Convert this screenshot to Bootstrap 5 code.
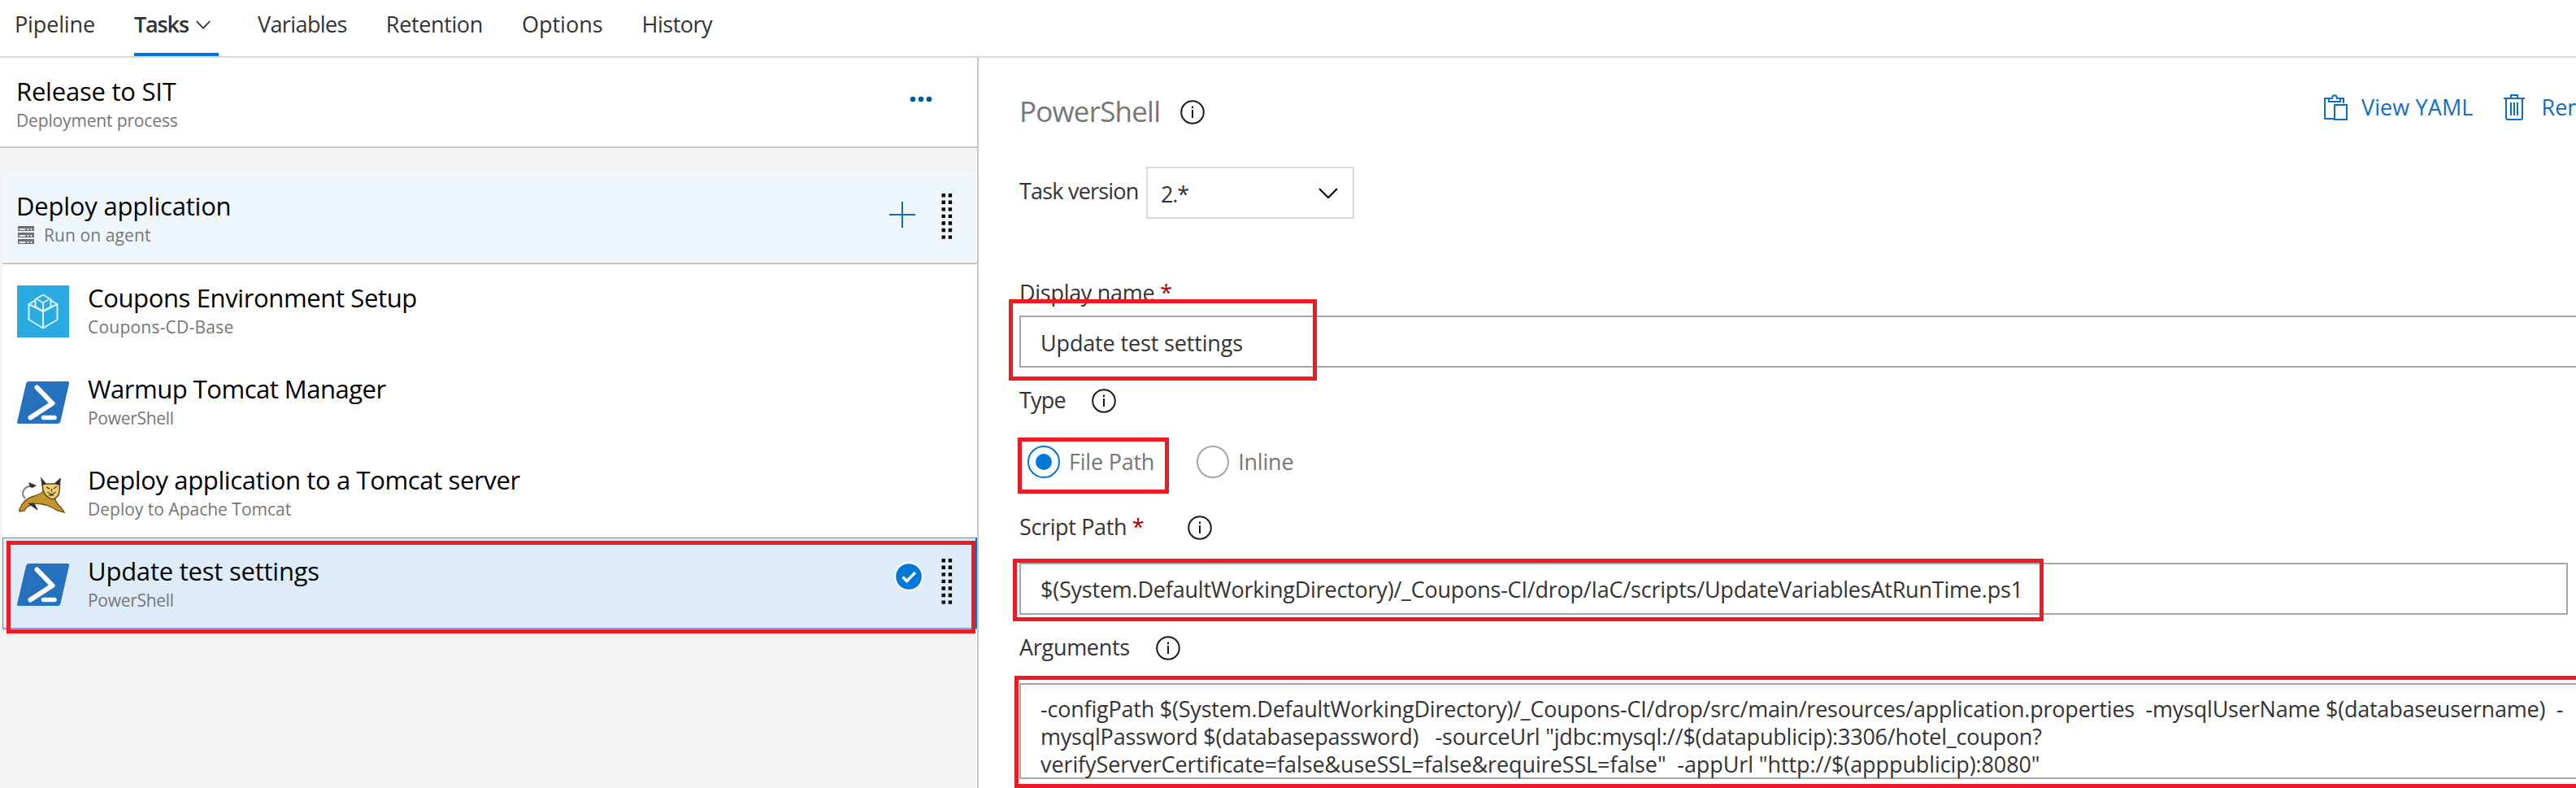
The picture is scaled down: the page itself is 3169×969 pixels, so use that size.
<!DOCTYPE html>
<html lang="en">
<head>
<meta charset="utf-8">
<meta name="viewport" content="width=device-width, initial-scale=1">
<title>Release pipeline tasks</title>
<link href="https://cdn.jsdelivr.net/npm/bootstrap@5.3.0/dist/css/bootstrap.min.css" rel="stylesheet">
<style>
body{height:969px;overflow:hidden;background:#fff;color:#333;font:27px/34px "Open Sans","Noto Sans",sans-serif;white-space:nowrap}
svg{display:block;flex:none}
/* letter tracking */
.k0{letter-spacing:-.1px}.k1{letter-spacing:-.15px}.k2{letter-spacing:-.22px}.k3{letter-spacing:-.29px}.k4{letter-spacing:-.37px}.k5{letter-spacing:-.5px}.k6{letter-spacing:-.6px}.k8{letter-spacing:-.8px}.k11{letter-spacing:-1.13px}
.p1{letter-spacing:.1px}.p2{letter-spacing:.22px}
/* top tabs */
.tabs{height:71px;border-bottom:2px solid #d9d9d9;padding-left:18px;gap:48px}
.tab-item{line-height:60px;height:69px}
.tab-item.current{font-weight:600;border-bottom:4px solid #0078d7}
.tab-arrow{margin:25px 10px 0 9px}
/* task list */
.side{width:1204px;height:898px;background:#f3f3f3;border-right:2px solid #c8c8c8}
.ttl{font-size:31px;line-height:36px;color:#000}
.sub{font-size:21px;line-height:36px;color:#767676}
.stage-row{height:111px;background:#fff;border-bottom:2px solid #c8c8c8;padding:23px 55px 0 20px}
.stage-row svg{margin-top:24px}
.phase{height:113px;margin:30px 0 0 3px;background:#eff6fc;border-bottom:2px solid #c8c8c8;padding:23px 30px 0 17px}
.phase .sub{gap:12px;padding-left:2px}
.phase .plus{margin:13px 32px 0 0}
.task{height:112px;margin-left:3px;background:#fff;padding:23px 30px 0 18px;gap:23px}
.task.sel{background:#deecf9;border:1px solid #4a8ff0;border-right:2px solid #106ebe;padding:22px 28px 0 17px;box-shadow:0 2px 0 #c8c8c8}
.grip,.task-icon{margin-top:3px}
.check{margin:7px -1px 0 auto}
/* red call-outs drawn over the page */
.callout{position:absolute;border:5px solid #ed1c24;pointer-events:none}
.c-task{left:4px;top:3px;width:1192px;height:114px}
.c-name{left:-13px;top:-20px;width:379px;height:100px}
.c-type{left:-2px;top:-10px;width:186px;height:69px}
.c-path{left:-8px;top:-5px;width:1268px;height:77px}
.c-args{left:-6px;top:-9px;width:1940px;height:138px}
/* details */
.main-pane{padding:41px 0 0 50px;height:898px;min-width:0;overflow:hidden}
.head{height:48px;gap:25px}
.head h1{font-size:35px;line-height:49px;font-weight:400;color:#767676;margin:0}
.head .info{margin-top:11px}
.tools{width:310px;color:#106ebe;overflow:hidden;margin-top:3px}
.tool-bin{margin:0 20px 0 38px}
.ver{margin-top:45px;height:64px}
.ver-label{width:156px;padding-top:13px}
.ver-box{width:256px;height:64px;border:2px solid #d9d9d9;padding:15px 18px 0 16px}
.ver-box svg{margin-top:9px}
.lab{height:34px;line-height:36px}
.lab .info{margin-top:4px}
.lab .w-type{width:89px}.lab .w-path{width:207px}.lab .w-args{width:168px}
.field{height:64px;border:2px solid #a6a6a6;padding:15px 23px 0 24px}
.path-field{padding-top:14px}
.args{height:118px;padding-top:13px;white-space:pre}
.req{color:#a80000}
.radios{height:40px;padding-left:10px;color:#767676}
.radios span{line-height:39px;margin-left:11px}
.radios .first-option{margin-right:52px}
.mt-name{margin-top:73px}.mt-in{margin-top:12px}.mt-lab{margin-top:22px}.mt-radio{margin-top:40px}.mt-path{margin-top:42px}.mt-box{margin-top:28px}
.wide{width:1935px}.path-w{width:1905px}
</style>
</head>
<body>
<svg width="0" height="0" class="d-none">
<symbol id="info" viewBox="0 0 30 30"><circle cx="15" cy="15" r="13.8" fill="none" stroke="#1a1a1a" stroke-width="2"/><path d="M15 12v10M15 7.6v2.6" stroke="#1a1a1a" stroke-width="2"/></symbol>
<symbol id="ps" viewBox="0 0 64 64"><path d="M14.500 6H62Q64.500 6 64 8.500L53.500 55Q52.700 58 50 58H2Q-.5 58 .2 55.500L11 9Q11.800 6 14.500 6z" fill="#2671be"/><path d="M24.500 13.500L43.500 33 16.500 50.500" fill="none" stroke="#fff" stroke-width="6" stroke-linecap="round" stroke-linejoin="round"/><path d="M32.500 50.500H46" stroke="#fff" stroke-width="5.500" stroke-linecap="round"/></symbol>
<symbol id="grip" viewBox="0 0 14 56"><path d="M2.700 0v56M10.900 0v56" stroke="#000" stroke-width="4.400" stroke-dasharray="4.400 4.170"/></symbol>
</svg>

<nav class="tabs d-flex">
<div class="tab-item"><span class="k1">Pipeline</span></div>
<div class="tab-item current d-flex"><span class="k11">Tasks</span><svg class="tab-arrow" width="18" height="12" viewBox="0 0 18 12"><path d="M.8 1l8.200 8.700L17.200 1" fill="none" stroke="#333" stroke-width="1.800"/></svg></div>
<div class="tab-item"><span class="k6">Variables</span></div>
<div class="tab-item"><span class="k4">Retention</span></div>
<div class="tab-item"><span>Options</span></div>
<div class="tab-item"><span class="k5">History</span></div>
</nav>

<div class="d-flex">
<aside class="side flex-shrink-0">
<div class="stage-row d-flex justify-content-between">
<div><div class="ttl k2">Release to SIT</div><div class="sub k1">Deployment process</div></div>
<svg width="28" height="8" viewBox="0 0 28 8"><g fill="#005ba1"><circle cx="4" cy="4" r="3.300"/><circle cx="14" cy="4" r="3.300"/><circle cx="24" cy="4" r="3.300"/></g></svg>
</div>
<div class="phase d-flex">
<div class="me-auto"><div class="ttl k2">Deploy application</div>
<div class="sub d-flex align-items-center p1"><svg width="20" height="22" viewBox="0 0 20 22"><path d="M0 0h20v6H0zM0 8h20v6H0zM0 16h20v6H0z" fill="#6e6e6e"/><path d="M1.500 3h8v1.800h-8zM1.500 11h8v1.800h-8zM1.500 19h8v1.800h-8zM11.500 2.800h2v2h-2zM11.500 10.800h2v2h-2zM11.500 18.800h2v2h-2zM15.500 2.800h2v2h-2zM15.500 10.800h2v2h-2zM15.500 18.800h2v2h-2z" fill="#eff6fc"/></svg>Run on agent</div></div>
<svg class="plus" width="32" height="32" viewBox="0 0 32 32"><path d="M0 16h32M16 0v32" stroke="#106ebe" stroke-width="2"/></svg>
<svg class="grip" width="14" height="56"><use href="#grip"/></svg>
</div>
<div class="task d-flex">
<svg class="task-icon" width="64" height="64" viewBox="0 0 64 64"><path fill="#29abe2" d="M0 0h64v64H0z"/><g fill="none" stroke="#d9f2fc" stroke-width="2" stroke-linejoin="round"><path d="M23 18L14.500 23v19L32 52.500 49.500 42V23L41 18M14.500 23L32 32l17.500-9M32 32v20"/><path d="M32 11.500l9.500 5.500v9.500L32 31.500l-9.500-5V17z"/><path d="M25 17l7 4.500 7-4.500M32 21.500V31"/></g></svg>
<div><div class="ttl k4">Coupons Environment Setup</div><div class="sub p2">Coupons-CD-Base</div></div>
</div>
<div class="task d-flex">
<svg class="task-icon" width="64" height="64"><use href="#ps"/></svg>
<div><div class="ttl k5">Warmup Tomcat Manager</div><div class="sub k3">PowerShell</div></div>
</div>
<div class="task d-flex">
<svg class="task-icon" width="64" height="64" viewBox="0 0 64 64">
<path d="M10 38C4 32 7 22 22 22" fill="none" stroke="#777" stroke-width="1.800"/><path d="M14 18l10 4-5 3-3-1z" fill="#333"/>
<path d="M3 51C7 42 12 37 21 35 28 33 31 31 33 28l13 8c1 5 4 10 9 14l3 5-8-2C45 50 41 48 36 46c-6-1-12-3-16-1-5 2-9 3-11 8l-6 1z" fill="#c4952b" stroke="#6b4c16" stroke-width="1.300"/>
<path d="M14 44l11 8-4-8zM34 30l9 6" fill="#333" stroke="#333"/>
<path d="M30 14l5 6h11l7-6-1 15c0 5-4 9-8 10-6-1-10-6-12-11z" fill="#f0cf7a" stroke="#5c4518" stroke-width="1.500"/>
<path d="M30 13l6 7-5 2zM53 13l-7 7 6 2z" fill="#333"/>
<path d="M36 24l4 2M49 23l-4 3M42.500 26v4M37 30l5.500 3 5.500-3M39 34h6" fill="none" stroke="#5c4518" stroke-width="1.400"/></svg>
<div><div class="ttl k4">Deploy application to a Tomcat server</div><div class="sub">Deploy to Apache Tomcat</div></div>
</div>
<div class="task sel d-flex position-relative">
<svg class="task-icon" width="64" height="64"><use href="#ps"/></svg>
<div><div class="ttl k2">Update test settings</div><div class="sub k3">PowerShell</div></div>
<svg class="check" width="36" height="36" viewBox="0 0 36 36"><circle cx="18" cy="18" r="18" fill="#fff"/><circle cx="18" cy="18" r="15.800" fill="#0078d7"/><path d="M10.500 18.500l5 5L26 13" fill="none" stroke="#fff" stroke-width="3.400"/></svg>
<svg class="grip" width="14" height="56"><use href="#grip"/></svg>
<div class="callout c-task"></div>
</div>
</aside>

<main class="main-pane flex-grow-1">
<div class="head d-flex">
<h1 class="k8">PowerShell</h1>
<svg class="info" width="30" height="30"><use href="#info"/></svg>
<div class="tools d-flex ms-auto">
<svg width="30" height="34" viewBox="0 0 30 34" class="me-3"><g fill="none" stroke="#106ebe" stroke-width="2"><path d="M12 31H1V6h5M20 6h4v6"/><path d="M6 6h4c0-5 6-5 6 0h4v4H6zM13 14h15v18H13z"/></g></svg>
<span class="p1">View YAML</span>
<svg class="tool-bin" width="26" height="34" viewBox="0 0 26 34"><g fill="none" stroke="#106ebe" stroke-width="2"><path d="M0 6h26M9 6V2h8v4M3 6v24q0 2 2 2h16q2 0 2-2V6M9 11v16M13 11v16M17 11v16"/></g></svg>
<span>Remove</span>
</div>
</div>
<div class="ver d-flex">
<div class="ver-label k8">Task version</div>
<div class="ver-box d-flex justify-content-between"><span class="k11">2.*</span><svg width="24" height="14" viewBox="0 0 24 14"><path d="M1 1l11 11L23 1" fill="none" stroke="#000" stroke-width="2"/></svg></div>
</div>
<div class="lab mt-name k3">Display name <span class="req">*</span></div>
<div class="mt-in position-relative wide"><div class="field k1">Update test settings</div><div class="callout c-name"></div></div>
<div class="lab mt-lab d-flex"><span class="w-type k8">Type</span><svg class="info" width="30" height="30"><use href="#info"/></svg></div>
<div class="radios mt-radio d-flex position-relative">
<svg width="40" height="40" viewBox="0 0 40 40"><circle cx="20" cy="20" r="19" fill="#fff" stroke="#0078d7" stroke-width="2"/><circle cx="20" cy="20" r="10" fill="#0078d7"/></svg>
<span class="k2 first-option">File Path</span>
<svg width="40" height="40" viewBox="0 0 40 40"><circle cx="20" cy="20" r="19" fill="#fff" stroke="#a6a6a6" stroke-width="2"/></svg>
<span class="k2">Inline</span>
<div class="callout c-type"></div>
</div>
<div class="lab mt-path d-flex"><span class="w-path k4">Script Path <span class="req">*</span></span><svg class="info" width="30" height="30"><use href="#info"/></svg></div>
<div class="mt-box position-relative path-w"><div class="field path-field k2">$(System.DefaultWorkingDirectory)/_Coupons-CI/drop/IaC/scripts/UpdateVariablesAtRunTime.ps1</div><div class="callout c-path"></div></div>
<div class="lab mt-lab d-flex"><span class="w-args k3">Arguments</span><svg class="info" width="30" height="30"><use href="#info"/></svg></div>
<div class="mt-box position-relative wide"><div class="field args"><span class="k2">-configPath $(System.DefaultWorkingDirectory)/_Coupons-CI/drop/src/main/resources/application.properties  -mysqlUserName $(databaseusername)  -</span>
<span class="k2">mysqlPassword $(databasepassword)   -sourceUrl "jdbc:mysql://$(datapublicip):3306/hotel_coupon?</span>
<span class="k0">verifyServerCertificate=false&amp;useSSL=false&amp;requireSSL=false"  -appUrl "http://$(apppublicip):8080"</span></div><div class="callout c-args"></div></div>
</main>
</div>
<script src="https://cdn.jsdelivr.net/npm/bootstrap@5.3.0/dist/js/bootstrap.bundle.min.js"></script>
</body>
</html>
